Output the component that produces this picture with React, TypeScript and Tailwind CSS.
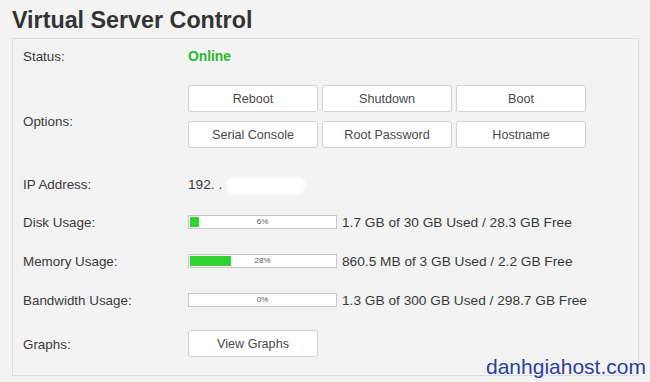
const buttons = ["Reboot", "Shutdown", "Boot", "Serial Console", "Root Password", "Hostname"];

const usage = [
  { label: "Disk Usage:", pct: 6, text: "1.7 GB of 30 GB Used / 28.3 GB Free", mt: "mt-[17px]" },
  { label: "Memory Usage:", pct: 28, text: "860.5 MB of 3 GB Used / 2.2 GB Free", mt: "mt-[19px]" },
  { label: "Bandwidth Usage:", pct: 0, text: "1.3 GB of 300 GB Used / 298.7 GB Free", mt: "mt-[19px]" },
];

function Btn({ children }: { children: string }) {
  return (
    <button className="h-[27px] w-[130px] rounded-[3px] border border-[#d2d2d2] bg-white pt-[2px] text-[12.6px] text-[#4a4a4a]">
      {children}
    </button>
  );
}

function Bar({ pct }: { pct: number }) {
  return (
    <div className="relative h-[14px] w-[149px] border border-[#c8c8c8] bg-white p-px">
      <div className="h-full bg-[#33d233]" style={{ width: `${pct}%` }} />
      <span className="absolute inset-0 flex items-center justify-center text-[8px] leading-none text-[#555]">
        {pct}%
      </span>
    </div>
  );
}

export default function App() {
  return (
    <div
      className="relative h-[382px] w-[650px] overflow-hidden bg-[#f3f3f3] px-3 pt-[7px] text-[13.4px] text-[#3a3a3a]"
      style={{ fontFamily: '"Liberation Sans", Arial, sans-serif' }}
    >
      <h1 className="h-[26px] text-[23.3px] font-bold leading-[26px] text-[#333]">Virtual Server Control</h1>

      <div className="mt-[5px] h-[338px] w-[627px] border border-[#dcdcdc] bg-[#f3f3f3] pl-[10px]">
        <div className="mt-[8px] flex h-5 items-center">
          <span className="w-[165px]">Status:</span>
          <span className="text-[13.8px] font-bold text-[#2bb82b]">Online</span>
        </div>

        <div className="mt-[18px] flex">
          <span className="w-[165px] pt-[27px]">Options:</span>
          <div className="grid grid-cols-[130px_130px_131px] gap-x-[4px] gap-y-[9px]">
            {buttons.map((b) => (
              <Btn key={b}>{b}</Btn>
            ))}
          </div>
        </div>

        <div className="mt-[27px] flex h-5 items-center">
          <span className="w-[165px]">IP Address:</span>
          <span className="text-[13.7px]">192. .</span>
          <span className="ml-[4px] h-[17px] w-[80px] rounded-full bg-white blur-[1.5px]" />
        </div>

        {usage.map((u) => (
          <div key={u.label} className={`${u.mt} flex h-5 items-center`}>
            <span className="w-[165px] pt-[2px]">{u.label}</span>
            <Bar pct={u.pct} />
            <span className="ml-[5px] pt-[2px] text-[13.7px]">{u.text}</span>
          </div>
        ))}

        <div className="mt-[20px] flex h-[27px] items-center">
          <span className="w-[165px] pt-[4px]">Graphs:</span>
          <Btn>View Graphs</Btn>
        </div>
      </div>

      <span className="absolute left-[486px] top-[356px] text-[21px] leading-[21px] text-[#2b3f9e]">danhgiahost.com</span>
    </div>
  );
}
